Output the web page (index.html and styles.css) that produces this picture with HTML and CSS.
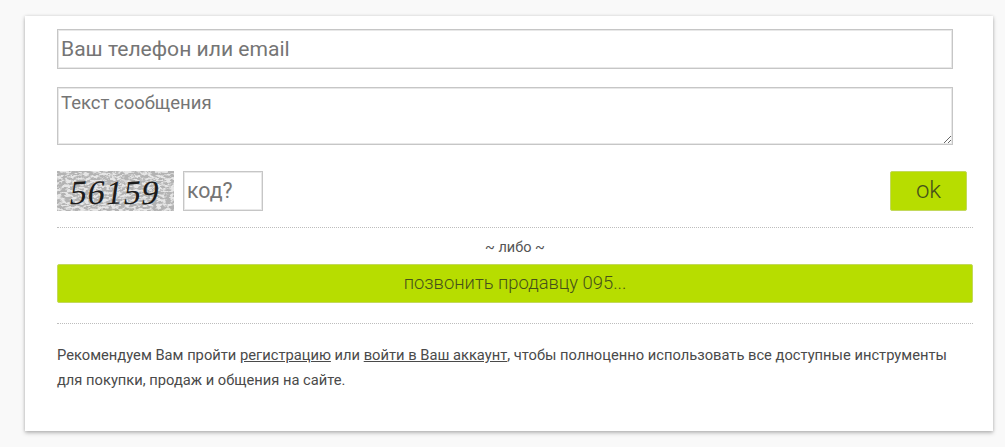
FILE: index.html
```html
<!DOCTYPE html>
<html lang="en">
<head>
    <meta charset="UTF-8">
    <meta name="viewport" content="width=device-width, initial-scale=1.0">
    <title>Сообщение продавцу</title>
    <link rel="stylesheet" href="styles.css">
</head>
<body>
    <div class="card">
        <form class="message-form">
            <input class="field field-contact" type="text" placeholder="Ваш телефон или email">
            <textarea class="field field-message" placeholder="Текст сообщения"></textarea>
            <div class="captcha-row">
                <div class="captcha">
                    <svg class="captcha-noise" width="117" height="40">
                        <filter id="noise">
                            <feTurbulence type="fractalNoise" baseFrequency="0.22 0.42" numOctaves="4" seed="11"/>
                            <feColorMatrix type="matrix" values="0 0 0 0 0.45  0 0 0 0 0.45  0 0 0 0 0.45  5 0 0 0 -1.9"/>
                        </filter>
                        <rect width="117" height="40" fill="#e6e6e6"/>
                        <rect width="117" height="40" filter="url(#noise)"/>
                    </svg>
                    <div class="captcha-code"><span>5</span><span>6</span><span>1</span><span>5</span><span>9</span></div>
                </div>
                <input class="field field-code" type="text" placeholder="код?">
                <button class="btn btn-ok" type="submit">ok</button>
            </div>
            <div class="or-block">
                <p class="or-label">~ либо ~</p>
                <button class="btn btn-call" type="button">позвонить продавцу 095...</button>
            </div>
        </form>
        <p class="note">Рекомендуем Вам пройти <a href="#">регистрацию</a> или <a href="#">войти в Ваш аккаунт</a>, чтобы полноценно использовать все доступные инструменты для покупки, продаж и общения на сайте.</p>
    </div>
</body>
</html>
```

FILE: styles.css
```css
body {
    font-family: Roboto, Arial, sans-serif;
    background-color: #f9f9f9;
    margin: 0;
    padding: 16px 12px 16px 25px;
    overflow: hidden;
}
.card {
    box-sizing: border-box;
    width: 968px;
    height: 415px;
    padding: 13px 20px 0 32px;
    background: #fff;
    box-shadow: 0 2px 4px rgba(0, 0, 0, 0.25), 0 0 3px rgba(0, 0, 0, 0.12);
}
.message-form { display: flex; flex-direction: column; }
.field {
    box-sizing: border-box;
    display: block;
    margin: 0;
    border: 1px solid #c6c6c6;
    box-shadow: inset 0 0 0 1px #e8e8e8;
    border-radius: 0;
    font-family: Roboto, Arial, sans-serif;
    color: #444;
    outline: none;
}
.field::placeholder { color: #757575; opacity: 1; }
.field-contact {
    width: 896px;
    height: 40px;
    padding: 0 3px 2px;
    font-size: 21.1px;
}
.field-message {
    width: 896px;
    height: 58px;
    margin-top: 18px;
    padding: 3px;
    font-size: 18.5px;
    line-height: 24px;
}
.captcha-row {
    display: flex;
    align-items: center;
    margin-top: 26px;
    padding-bottom: 16px;
    border-bottom: 1px dotted #bdbdbd;
    width: 916px;
}
.captcha { position: relative; width: 117px; height: 40px; }
.captcha-noise { display: block; }
.captcha-code {
    position: absolute;
    left: 13px;
    top: 5px;
    display: flex;
    font-family: "Liberation Serif", serif;
    font-size: 34px;
    line-height: 34px;
    color: #1c1c1c;
}
.captcha-code span { display: block; width: 18px; transform: skewX(-12deg) rotate(-4deg); }
.field-code {
    width: 80px;
    height: 40px;
    margin-left: 9px;
    padding: 0 3px 2px;
    font-size: 21.3px;
}
.btn {
    box-sizing: border-box;
    border: 1px solid #c3d95c;
    border-radius: 2px;
    background-color: #b7dd00;
    color: #46511a;
    font-family: Roboto, Arial, sans-serif;
    font-weight: 300;
    cursor: pointer;
}
.btn-ok {
    width: 77px;
    height: 40px;
    margin-left: auto;
    margin-right: 6px;
    padding-bottom: 3px;
    font-size: 24px;
}
.or-block {
    width: 916px;
    padding-bottom: 20px;
    border-bottom: 1px dotted #bdbdbd;
}
.or-label {
    margin: 11px 0 7px;
    text-align: center;
    font-size: 14.5px;
    line-height: 18px;
    color: #555;
}
.btn-call {
    display: block;
    width: 100%;
    height: 39px;
    padding-bottom: 3px;
    font-size: 18.4px;
}
.note {
    width: 905px;
    margin: 19px 0 0;
    font-size: 14.71px;
    line-height: 25px;
    color: #4a4a4a;
}
.note a { color: #4a4a4a; }
```
